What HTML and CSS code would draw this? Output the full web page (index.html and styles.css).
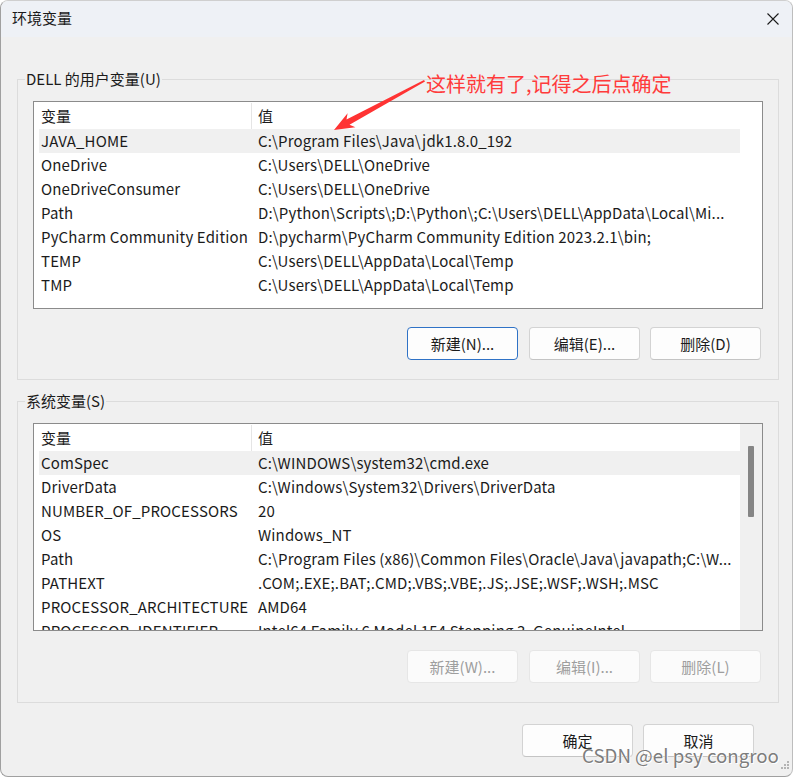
FILE: index.html
```html
<!DOCTYPE html>
<html lang="zh-CN">
<head>
<meta charset="utf-8">
<title>环境变量</title>
<link rel="stylesheet" href="styles.css">
</head>
<body>
<div class="window">
  <div class="titlebar">
    <span class="title">环境变量</span>
    <svg class="close" width="12" height="12" viewBox="0 0 12 12"><path d="M0.5 0.5 L11.5 11.5 M11.5 0.5 L0.5 11.5" stroke="#1b1b1b" stroke-width="1.1" fill="none"/></svg>
  </div>
  <div class="content">
    <fieldset class="group">
      <legend class="group-label">DELL 的用户变量(U)</legend>
      <div class="group-body">
        <div class="list">
          <div class="list-body">
            <div class="row head"><span class="c1">变量</span><span class="c2">值</span></div>
            <div class="row sel"><span class="c1">JAVA_HOME</span><span class="c2">C:\Program Files\Java\jdk1.8.0_192</span></div>
            <div class="row"><span class="c1">OneDrive</span><span class="c2">C:\Users\DELL\OneDrive</span></div>
            <div class="row"><span class="c1">OneDriveConsumer</span><span class="c2">C:\Users\DELL\OneDrive</span></div>
            <div class="row"><span class="c1">Path</span><span class="c2">D:\Python\Scripts\;D:\Python\;C:\Users\DELL\AppData\Local\Mi...</span></div>
            <div class="row"><span class="c1">PyCharm Community Edition</span><span class="c2">D:\pycharm\PyCharm Community Edition 2023.2.1\bin;</span></div>
            <div class="row"><span class="c1">TEMP</span><span class="c2">C:\Users\DELL\AppData\Local\Temp</span></div>
            <div class="row"><span class="c1">TMP</span><span class="c2">C:\Users\DELL\AppData\Local\Temp</span></div>
          </div>
          <div class="scroll-space"></div>
        </div>
        <div class="buttons">
          <button class="btn focus">新建(N)...</button>
          <button class="btn">编辑(E)...</button>
          <button class="btn">删除(D)</button>
        </div>
      </div>
    </fieldset>

    <fieldset class="group second">
      <legend class="group-label">系统变量(S)</legend>
      <div class="group-body">
        <div class="list">
          <div class="list-body">
            <div class="row head"><span class="c1">变量</span><span class="c2">值</span></div>
            <div class="row sel"><span class="c1">ComSpec</span><span class="c2">C:\WINDOWS\system32\cmd.exe</span></div>
            <div class="row"><span class="c1">DriverData</span><span class="c2">C:\Windows\System32\Drivers\DriverData</span></div>
            <div class="row"><span class="c1">NUMBER_OF_PROCESSORS</span><span class="c2">20</span></div>
            <div class="row"><span class="c1">OS</span><span class="c2">Windows_NT</span></div>
            <div class="row"><span class="c1">Path</span><span class="c2">C:\Program Files (x86)\Common Files\Oracle\Java\javapath;C:\W...</span></div>
            <div class="row"><span class="c1">PATHEXT</span><span class="c2">.COM;.EXE;.BAT;.CMD;.VBS;.VBE;.JS;.JSE;.WSF;.WSH;.MSC</span></div>
            <div class="row"><span class="c1">PROCESSOR_ARCHITECTURE</span><span class="c2">AMD64</span></div>
            <div class="row"><span class="c1">PROCESSOR_IDENTIFIER</span><span class="c2">Intel64 Family 6 Model 154 Stepping 3, GenuineIntel</span></div>
          </div>
          <div class="scrollbar"><div class="thumb"></div></div>
        </div>
        <div class="buttons">
          <button class="btn" disabled>新建(W)...</button>
          <button class="btn" disabled>编辑(I)...</button>
          <button class="btn" disabled>删除(L)</button>
        </div>
      </div>
    </fieldset>

    <div class="footer">
      <button class="btn">确定</button>
      <button class="btn">取消</button>
    </div>
  </div>

  <div class="note">这样就有了,记得之后点确定</div>
  <svg class="arrow" width="120" height="70" viewBox="320 70 120 70">
    <polygon points="424,80 346.5,119.6 347.6,113.3 334,130 355.4,127.3 349.5,124.8 425,81.5" fill="#ff3333"/>
  </svg>
  <div class="watermark">CSDN @el psy congroo</div>
  <svg class="grip" width="12" height="12" viewBox="0 0 12 12">
    <g fill="#b4b4b4">
      <rect x="9" y="0" width="2" height="2"/>
      <rect x="6" y="3" width="2" height="2"/><rect x="9" y="3" width="2" height="2"/>
      <rect x="3" y="6" width="2" height="2"/><rect x="6" y="6" width="2" height="2"/><rect x="9" y="6" width="2" height="2"/>
    </g>
  </svg>
</div>
</body>
</html>
```
FILE: styles.css
```css
* { box-sizing: border-box; }

html, body {
  margin: 0;
  padding: 0;
  background: #ffffff;
}

body {
  font-family: "Noto Sans CJK SC", "Noto Sans", sans-serif;
  font-size: 15px;
  color: #1b1b1b;
}

.window {
  position: relative;
  width: 793px;
  height: 777px;
  border: 1px solid #a0a0a0;
  border-top-color: #cfcfcf;
  border-right-color: #bdbdbd;
  border-radius: 8px;
  background: #f0f0f0;
  overflow: hidden;
  display: flex;
  flex-direction: column;
}

.titlebar {
  height: 36px;
  flex: none;
  display: flex;
  align-items: center;
  justify-content: space-between;
  padding: 0 13px 0 11px;
  background: #eef1f6;
}

.title {
  line-height: 20px;
  font-size: 15px;
  margin-top: -2px;
}

.close { display: block; }

.content {
  padding: 32px 13px 0 16px;
  display: flex;
  flex-direction: column;
}

.group {
  margin: 0;
  padding: 0;
  border: 1px solid #dcdcdc;
  min-width: 0;
}

.group.second { margin-top: 11px; }

.group-label {
  margin-left: 7px;
  padding: 0 1px;
  line-height: 20px;
  font-size: 15px;
}

.group-body {
  padding: 12px 15px 19px 15px;
}

.list {
  height: 208px;
  border: 1px solid #8b8b8b;
  background: #ffffff;
  display: flex;
  overflow: hidden;
}

.list-body {
  flex: 1;
  min-width: 0;
  padding-left: 5px;
  overflow: hidden;
}

.row {
  display: flex;
  height: 24px;
  line-height: 24px;
  white-space: nowrap;
  letter-spacing: 0.15px;
}

.row.head {
  height: 27px;
  line-height: 27px;
  letter-spacing: 0;
}

.row.sel { background: #f0f0f0; }

.c1 {
  flex: none;
  width: 213px;
  padding-left: 2px;
  overflow: hidden;
}

.head .c1 {
  width: 213px;
  border-right: 1px solid #e5e5e5;
  margin-top: 1px;
  line-height: 26px;
}

.c2 {
  flex: 1;
  min-width: 0;
  padding-left: 6px;
  overflow: hidden;
}

.scroll-space {
  width: 22px;
  flex: none;
}

.scrollbar {
  width: 22px;
  flex: none;
  background: #f0f0f0;
  padding: 22px 0 0 8px;
}

.thumb {
  width: 6px;
  height: 71px;
  background: #858585;
  border-radius: 1px;
}

.buttons {
  display: flex;
  justify-content: flex-end;
  gap: 10px;
  margin-top: 18px;
  padding-right: 2px;
}

.buttons .btn:first-child { margin-right: 1px; }

.second .buttons { margin-top: 19px; }

.btn {
  width: 111px;
  height: 33px;
  padding: 0;
  font-family: inherit;
  font-size: 15px;
  line-height: 20px;
  color: #1b1b1b;
  background: #fdfdfd;
  border: 1px solid #d3d3d3;
  border-bottom-color: #c4c4c4;
  border-radius: 4px;
}

.btn.focus {
  border-color: #2f72c6;
}

.btn:disabled {
  color: #9e9e9e;
  background: #fbfbfb;
  border-color: #e6e6e6;
}

.footer {
  display: flex;
  justify-content: flex-end;
  gap: 10px;
  margin-top: 21px;
  padding-right: 25px;
}

.note {
  position: absolute;
  left: 425px;
  top: 71px;
  font-size: 20px;
  line-height: 24px;
  color: #ff3b3b;
  white-space: nowrap;
}

.arrow {
  position: absolute;
  left: 319px;
  top: 69px;
}

.watermark {
  position: absolute;
  left: 581px;
  top: 743px;
  font-size: 18.7px;
  line-height: 22px;
  color: #7d7d7d;
  white-space: nowrap;
  text-shadow: 0 0 1px #ffffff, 0 0 1px #ffffff, 1px 1px 0 #ffffff;
}

.grip {
  position: absolute;
  right: 2px;
  bottom: 3px;
}
```
